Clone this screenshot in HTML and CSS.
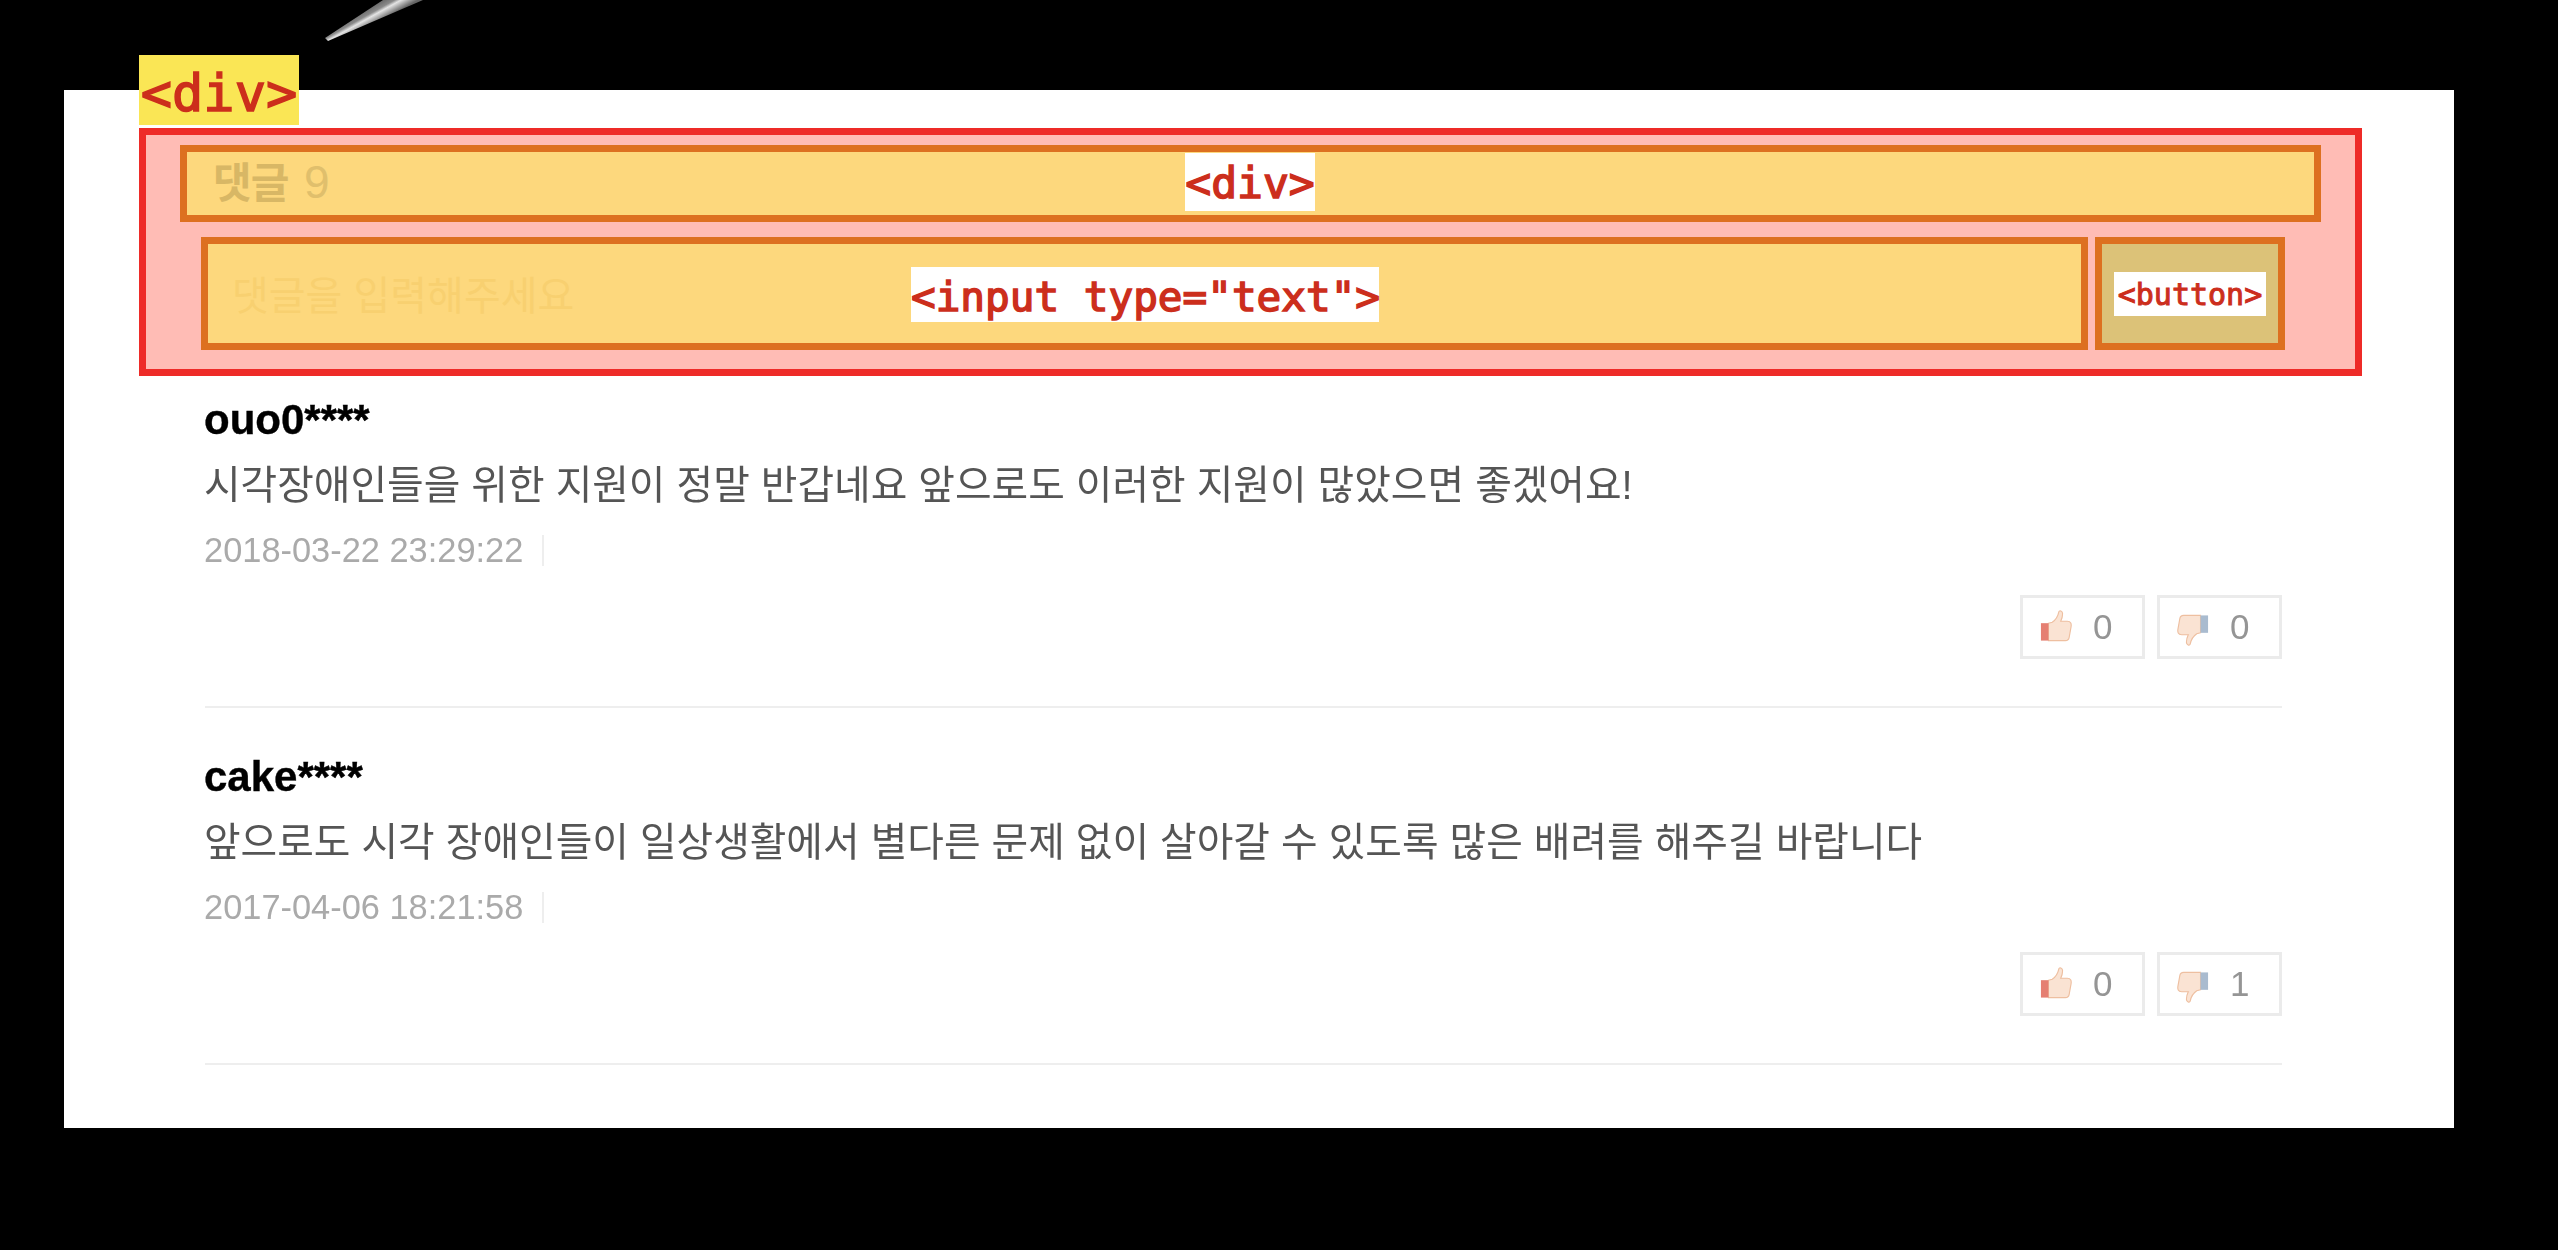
FILE: index.html
```html
<!DOCTYPE html>
<html lang="ko">

<head>
    <meta charset="UTF-8">
    <meta name="viewport" content="width=device-width, initial-scale=1.0">
    <title>댓글</title>
    <link rel="stylesheet" href="styles.css">
</head>

<body>

    <svg class="needle" width="120" height="44" viewBox="0 0 120 44">
        <defs>
            <linearGradient id="needleFill" gradientUnits="userSpaceOnUse" x1="52" y1="2" x2="62" y2="20">
                <stop offset="0" stop-color="#555"></stop>
                <stop offset="0.45" stop-color="#8a8a8a"></stop>
                <stop offset="0.6" stop-color="#e4e4e4"></stop>
                <stop offset="1" stop-color="#666"></stop>
            </linearGradient>
        </defs>
        <polygon points="5,38 63,0 103,0 8,41" fill="url(#needleFill)"></polygon>
    </svg>

    <span class="tag tag-yellow">&lt;div&gt;</span>

    <div class="panel">
        <div class="comment-box">
            <div class="comment-head">
                <strong>댓글</strong> <span class="count">9</span>
                <span class="tag tag-white tag-head">&lt;div&gt;</span>
            </div>
            <div class="form-row">
                <div class="fake-input">
                    <span class="placeholder">댓글을 입력해주세요</span>
                    <span class="tag tag-white tag-input">&lt;input type="text"&gt;</span>
                </div>
                <div class="fake-button">
                    <span class="tag tag-white tag-button">&lt;button&gt;</span>
                </div>
            </div>
        </div>

        <div class="comment-list">
            <div class="comment">
                <div class="name">ouo0****</div>
                <div class="body">시각장애인들을 위한 지원이 정말 반갑네요 앞으로도 이러한 지원이 많았으면 좋겠어요!</div>
                <div class="date"><span>2018-03-22 23:29:22</span><i class="sep"></i></div>
                <div class="votes">
                    <div class="vote">
                        <svg class="thumb thumb-up" width="32" height="32" viewBox="0 0 34 34">
                            <path class="hand" d="M9 14 L13 13 C16 11 19 7 20 2 C20.500 0 24 1 24 4 C24 7 23 10 22 12 L29 12 C33 12 33.500 15 33 18 L31 29 C30.500 32 29 32.500 27 32.500 L9 32.500 Z"></path>
                            <rect class="cuff-up" x="1" y="14" width="8" height="18.500"></rect>
                        </svg>
                        <span class="num">0</span>
                    </div>
                    <div class="vote">
                        <svg class="thumb thumb-down" width="32" height="32" viewBox="0 0 34 34">
                            <path class="hand" d="M9 14 L13 13 C16 11 19 7 20 2 C20.500 0 24 1 24 4 C24 7 23 10 22 12 L29 12 C33 12 33.500 15 33 18 L31 29 C30.500 32 29 32.500 27 32.500 L9 32.500 Z"></path>
                            <rect class="cuff-down" x="1" y="14" width="8" height="18.500"></rect>
                        </svg>
                        <span class="num">0</span>
                    </div>
                </div>
            </div>

            <div class="comment">
                <div class="name">cake****</div>
                <div class="body">앞으로도 시각 장애인들이 일상생활에서 별다른 문제 없이 살아갈 수 있도록 많은 배려를 해주길 바랍니다</div>
                <div class="date"><span>2017-04-06 18:21:58</span><i class="sep"></i></div>
                <div class="votes">
                    <div class="vote">
                        <svg class="thumb thumb-up" width="32" height="32" viewBox="0 0 34 34">
                            <path class="hand" d="M9 14 L13 13 C16 11 19 7 20 2 C20.500 0 24 1 24 4 C24 7 23 10 22 12 L29 12 C33 12 33.500 15 33 18 L31 29 C30.500 32 29 32.500 27 32.500 L9 32.500 Z"></path>
                            <rect class="cuff-up" x="1" y="14" width="8" height="18.500"></rect>
                        </svg>
                        <span class="num">0</span>
                    </div>
                    <div class="vote">
                        <svg class="thumb thumb-down" width="32" height="32" viewBox="0 0 34 34">
                            <path class="hand" d="M9 14 L13 13 C16 11 19 7 20 2 C20.500 0 24 1 24 4 C24 7 23 10 22 12 L29 12 C33 12 33.500 15 33 18 L31 29 C30.500 32 29 32.500 27 32.500 L9 32.500 Z"></path>
                            <rect class="cuff-down" x="1" y="14" width="8" height="18.500"></rect>
                        </svg>
                        <span class="num">1</span>
                    </div>
                </div>
            </div>
        </div>
    </div>

</body>

</html>
```

FILE: styles.css
```css
* {
    box-sizing: border-box;
}

body {
    background-color: #000;
    font-family: "Liberation Sans", "Noto Sans CJK KR", sans-serif;
    margin: 0;
    padding: 90px 104px 122px 64px;
    height: 1250px;
    overflow: hidden;
    position: relative;
}

.needle {
    position: absolute;
    left: 320px;
    top: 0;
    filter: blur(0.6px);
}

.panel {
    background-color: #fff;
    height: 1038px;
    padding-top: 38px;
}

/* highlighted form area */
.comment-box {
    position: relative;
    margin-left: 75px;
    width: 2223px;
    height: 248px;
    background-color: #ffbcb5;
    border: 7px solid #ee2b28;
    padding: 10px 0 0 34px;
}

.comment-head {
    position: relative;
    width: 2141px;
    height: 77px;
    background-color: #fdd87d;
    border: 7px solid #dd7020;
    padding-left: 26px;
    line-height: 60px;
    font-size: 42px;
    color: #d8b765;
}

.comment-head strong {
    letter-spacing: -1px;
}

.count {
    font-size: 46px;
    font-weight: normal;
    margin-left: 4px;
    color: #e0bf6c;
}

.form-row {
    display: flex;
    gap: 7px;
    margin: 15px 0 0 21px;
}

.fake-input {
    position: relative;
    width: 1887px;
    height: 113px;
    background-color: #fdd87d;
    border: 7px solid #dd7020;
    padding: 24px 0 0 24px;
}

.placeholder {
    font-size: 40px;
    line-height: 56px;
    color: #f8d070;
}

.fake-button {
    width: 190px;
    height: 113px;
    background-color: #dcc278;
    border: 7px solid #dd7020;
    display: flex;
    align-items: center;
    justify-content: center;
}

.tag {
    font-family: "DejaVu Sans Mono", monospace;
    color: #cc2e1c;
    -webkit-text-stroke: 1.5px #cc2e1c;
    text-align: center;
    white-space: nowrap;
}

.tag-yellow {
    position: absolute;
    left: 139px;
    top: 55px;
    width: 160px;
    height: 70px;
    background-color: #fae655;
    font-size: 52px;
    line-height: 76px;
}

.tag-white {
    background-color: #fff;
}

.tag-head {
    position: absolute;
    left: 998px;
    top: 1px;
    width: 130px;
    height: 58px;
    font-size: 43px;
    line-height: 60px;
}

.tag-input {
    position: absolute;
    left: 703px;
    top: 23px;
    width: 468px;
    height: 55px;
    font-size: 41px;
    line-height: 60px;
}

.tag-button {
    width: 152px;
    height: 44px;
    font-size: 30px;
    line-height: 46px;
    -webkit-text-stroke-width: 1px;
}

/* comments */
.comment-list {
    margin-left: 141px;
    width: 2077px;
}

.comment {
    padding-top: 49px;
    padding-bottom: 47px;
    border-bottom: 2px solid #eee;
}

.comment:first-child {
    padding-top: 24px;
}

.name {
    font-size: 42px;
    line-height: 40px;
    font-weight: bold;
    color: #000;
    margin-left: -1px;
    -webkit-text-stroke: 0.4px #000;
    filter: blur(0.5px);
}

.body {
    margin-top: 20px;
    font-size: 39.8px;
    line-height: 50px;
    color: #555;
    margin-left: -1px;
    filter: blur(0.5px);
}

.date {
    margin-top: 20px;
    font-size: 34.4px;
    line-height: 40px;
    color: #aaa;
    display: flex;
    align-items: center;
    margin-left: -1px;
}

.date span {
    filter: blur(0.5px);
}

.sep {
    width: 2px;
    height: 31px;
    margin-left: 19px;
    background-color: #eee;
}

.votes {
    margin-top: 25px;
    display: flex;
    justify-content: flex-end;
    gap: 12px;
}

.vote {
    width: 125px;
    height: 64px;
    border: 3px solid #ebebeb;
    display: flex;
    align-items: center;
    padding-left: 17px;
}

.thumb {
    flex: none;
    filter: blur(0.6px);
}

.thumb-up {
    margin-top: -3px;
}

.thumb-down {
    margin-top: 5px;
    transform: rotate(180deg);
}

.hand {
    fill: #fae3d3;
    stroke: #eebfa0;
    stroke-width: 1.2;
}

.cuff-up {
    fill: #e57f72;
}

.cuff-down {
    fill: #a9bbcf;
}

.num {
    margin-left: 21px;
    font-size: 35px;
    color: #959595;
    filter: blur(0.4px);
}
```
